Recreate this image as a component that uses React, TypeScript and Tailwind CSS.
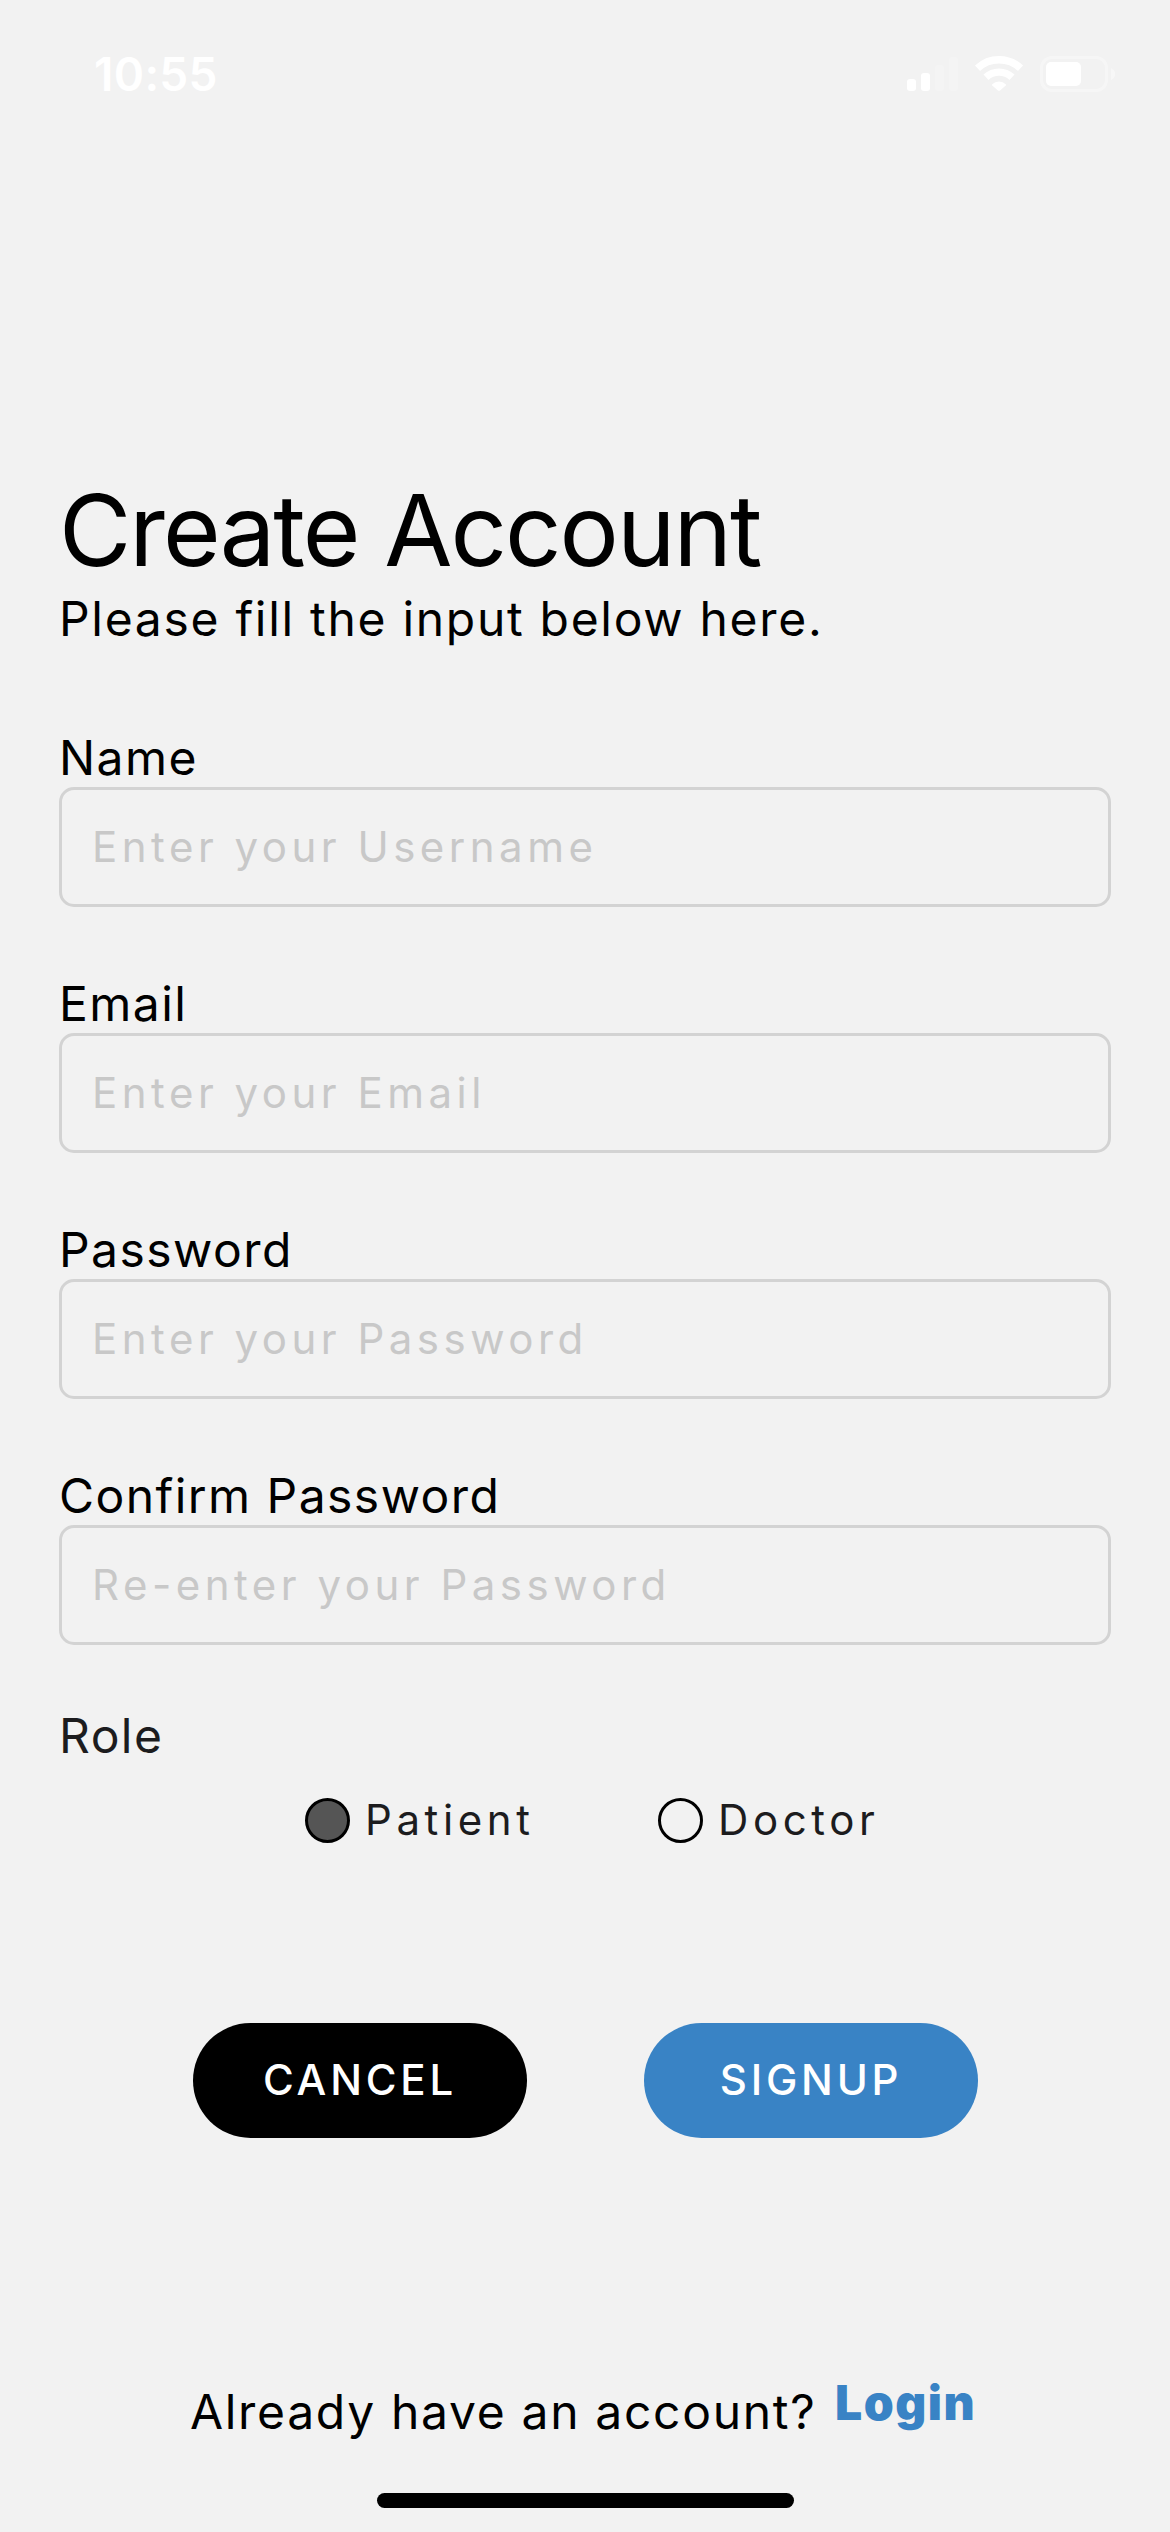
const fields = [
  { label: 'Name', placeholder: 'Enter your Username' },
  { label: 'Email', placeholder: 'Enter your Email' },
  { label: 'Password', placeholder: 'Enter your Password' },
  { label: 'Confirm Password', placeholder: 'Re-enter your Password' },
];

function StatusIcons() {
  return (
    <svg width="210" height="40" viewBox="0 0 210 40" fill="white" overflow="visible">
      <rect x="2" y="25" width="9" height="12" rx="3" />
      <rect x="16" y="19" width="9" height="18" rx="3" />
      <rect x="30" y="11" width="9" height="26" rx="3" fillOpacity=".2" />
      <rect x="44" y="3" width="9" height="34" rx="3" fillOpacity=".2" />
      <g fill="none" stroke="white" strokeWidth="7.4">
        <path d="M72.5 14.2a31.5 31.5 0 0 1 43 0" />
        <path d="M81 23.3a19 19 0 0 1 26 0" />
      </g>
      <path d="M87.2 30.2a10 10 0 0 1 13.6 0q.6.8 0 1.4l-5.8 5a1.5 1.5 0 0 1-2 0l-5.8-5q-.6-.6 0-1.4z" />
      <rect x="136.5" y="3.5" width="65" height="33" rx="10.5" fill="none" stroke="white" strokeOpacity=".35" strokeWidth="3" />
      <rect x="141" y="8" width="35" height="24" rx="5" />
      <path d="M206 14q4.2 2 4.2 6t-4.2 6z" fillOpacity=".4" />
    </svg>
  );
}

export default function App() {
  return (
    <main className="flex h-[2532px] w-[1170px] flex-col bg-[#f2f2f2] font-['Inter',sans-serif] whitespace-nowrap text-black">
      <header className="flex h-[140px] items-start justify-between pt-[49px] pr-[55px] pl-[94px] text-white">
        <span className="text-[46px] leading-[50px] font-semibold tracking-[0.3px]">10:55</span>
        <div className="pt-[5px]">
          <StatusIcons />
        </div>
      </header>

      <section className="mt-[338px] px-[59px]">
        <h1 className="h-[104px] text-[99px] leading-[104px] tracking-[-2px]">Create Account</h1>
        <p className="mt-[7px] mb-[12px] h-[60px] text-[48px] leading-[60px] tracking-[1.7px]">
          Please fill the input below here.
        </p>
        {fields.map((f) => (
          <div key={f.label} className="pt-[68px]">
            <label className="block h-[58px] text-[48px] leading-[58px] tracking-[1.45px]">{f.label}</label>
            <div className="flex h-[120px] items-center rounded-[15px] border-[3px] border-[#d3d3d3] px-[30px] pb-[1px] text-[42px] tracking-[4.5px] text-[#c8c8c8]">
              {f.placeholder}
            </div>
          </div>
        ))}
      </section>

      <section className="mt-[62px] text-[#1c1c1e]">
        <h2 className="h-[58px] px-[59px] text-[48px] leading-[58px] tracking-[1.45px]">Role</h2>
        <div className="mt-[33px] flex h-[45px] pl-[305px] text-[42px] leading-[43px] tracking-[4.6px]">
          <div className="flex w-[353px] gap-[15px]">
            <span className="size-[45px] rounded-full border-[3px] border-black bg-[#555]" />
            <span>Patient</span>
          </div>
          <div className="flex gap-[15px]">
            <span className="size-[45px] rounded-full border-[3px] border-black" />
            <span>Doctor</span>
          </div>
        </div>
      </section>

      <div className="mt-[180px] flex gap-[117px] pl-[193px] text-[42px] font-medium tracking-[3.8px] text-white">
        <button className="h-[115px] w-[334px] rounded-full bg-black pb-[2px]">CANCEL</button>
        <button className="h-[115px] w-[334px] rounded-full bg-[#3983c5] pb-[2px]">SIGNUP</button>
      </div>

      <div className="mt-[243px] flex h-[70px] pl-[190px] text-[48px] leading-[60px]">
        <span className="w-[645px] pt-[1px] tracking-[1.68px]">Already have an account?</span>
        <a className="-mt-[8px] font-black tracking-[1.5px] text-[#3983c5]">Login</a>
      </div>

      <div className="mt-[42px] ml-[377px] h-[15px] w-[417px] rounded-full bg-black" />
    </main>
  );
}
